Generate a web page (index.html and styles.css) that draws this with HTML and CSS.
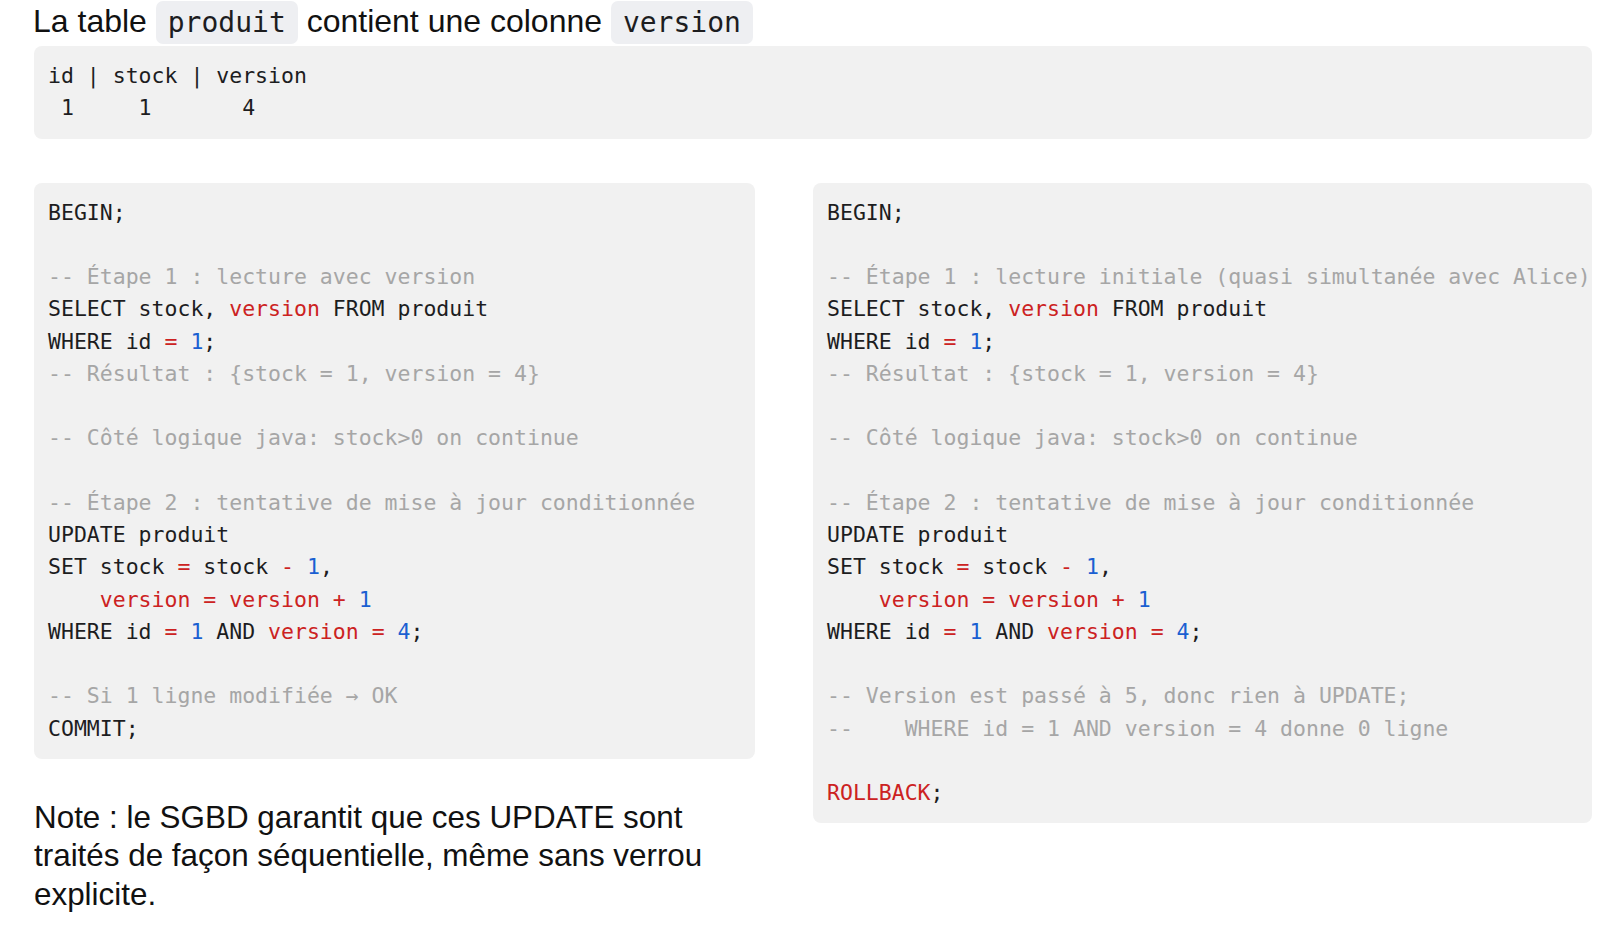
FILE: index.html
```html
<!DOCTYPE html>
<html lang="fr">
<head>
<meta charset="utf-8">
<title>Verrou optimiste</title>
<link rel="stylesheet" href="styles.css">
</head>
<body>
<main class="page">
<h2 class="title">La table <code class="inline">produit</code> contient une colonne <code class="inline">version</code></h2>
<pre class="block">id | stock | version
 1     1       4</pre>
<div class="cols">
<div class="col">
<pre class="block">BEGIN;

<span class="c">-- Étape 1 : lecture avec version</span>
SELECT stock, <span class="v">version</span> FROM produit
WHERE id <span class="o">=</span> <span class="n">1</span>;
<span class="c">-- Résultat : {stock = 1, version = 4}</span>

<span class="c">-- Côté logique java: stock&gt;0 on continue</span>

<span class="c">-- Étape 2 : tentative de mise à jour conditionnée</span>
UPDATE produit
SET stock <span class="o">=</span> stock <span class="o">-</span> <span class="n">1</span>,
    <span class="v">version</span> <span class="o">=</span> <span class="v">version</span> <span class="o">+</span> <span class="n">1</span>
WHERE id <span class="o">=</span> <span class="n">1</span> AND <span class="v">version</span> <span class="o">=</span> <span class="n">4</span>;

<span class="c">-- Si 1 ligne modifiée → OK</span>
COMMIT;</pre>
<p class="note">Note : le SGBD garantit que ces UPDATE sont traités de façon séquentielle, même sans verrou explicite.</p>
</div>
<div class="col">
<pre class="block">BEGIN;

<span class="c">-- Étape 1 : lecture initiale (quasi simultanée avec Alice)</span>
SELECT stock, <span class="v">version</span> FROM produit
WHERE id <span class="o">=</span> <span class="n">1</span>;
<span class="c">-- Résultat : {stock = 1, version = 4}</span>

<span class="c">-- Côté logique java: stock&gt;0 on continue</span>

<span class="c">-- Étape 2 : tentative de mise à jour conditionnée</span>
UPDATE produit
SET stock <span class="o">=</span> stock <span class="o">-</span> <span class="n">1</span>,
    <span class="v">version</span> <span class="o">=</span> <span class="v">version</span> <span class="o">+</span> <span class="n">1</span>
WHERE id <span class="o">=</span> <span class="n">1</span> AND <span class="v">version</span> <span class="o">=</span> <span class="n">4</span>;

<span class="c">-- Version est passé à 5, donc rien à UPDATE;</span>
<span class="c">--    WHERE id = 1 AND version = 4 donne 0 ligne</span>

<span class="v">ROLLBACK</span>;</pre>
</div>
</div>
</main>
</body>
</html>
```
FILE: styles.css
```css
html, body {
  margin: 0;
  padding: 0;
  background: #ffffff;
}

body {
  font-family: "Liberation Sans", Arial, sans-serif;
  color: #111111;
}

.page {
  width: 1558px;
  margin-left: 34px;
}

.title {
  margin: 0 0 4px -1px;
  font-size: 32px;
  font-weight: 400;
  line-height: 42px;
}

.inline {
  font-family: "DejaVu Sans Mono", monospace;
  font-size: 28px;
  line-height: 1;
  background: #eeeff2;
  color: #1d1d1f;
  padding: 5px 12px 5px;
  border-radius: 7px;
}

.block {
  margin: 0;
  padding: 14px;
  background: #f1f1f1;
  border-radius: 8px;
  font-family: "DejaVu Sans Mono", monospace;
  font-size: 21.5px;
  line-height: 32.25px;
  color: #1d1d1f;
  white-space: pre;
  overflow: visible;
}

.cols {
  display: grid;
  grid-template-columns: 721px 779px;
  column-gap: 58px;
  align-items: start;
  margin-top: 44px;
}

.col {
  min-width: 0;
}

.c { color: #a6a6a6; }
.v { color: #cc2222; }
.o { color: #cc2222; }
.n { color: #1a5fd1; }

.note {
  margin: 40px 0 0 0;
  font-size: 31.4px;
  line-height: 38.5px;
  color: #111111;
}
```
